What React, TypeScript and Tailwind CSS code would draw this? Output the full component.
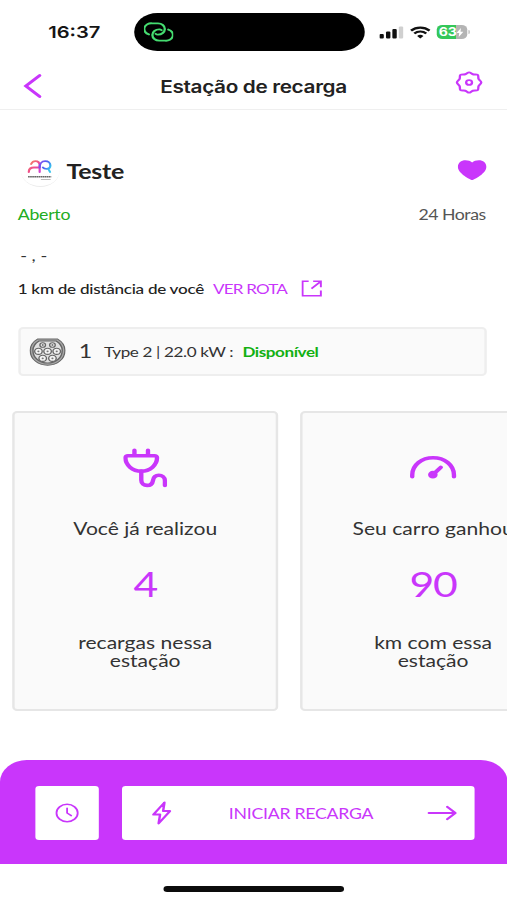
import React from 'react';

const PURPLE = '#c936fb';

const stats = [
  { id: 'charges', icon: <PlugIcon />, title: 'Você já realizou', value: '4', lines: ['recargas nessa', 'estação'] },
  { id: 'km', icon: <GaugeIcon />, title: 'Seu carro ganhou', value: '90', lines: ['km com essa', 'estação'] },
];

function LinkIcon() {
  return (
    <svg width="24" height="20" viewBox="0 0 24 20" fill="none" stroke="#45dc70" strokeWidth="1.9" strokeLinecap="round">
      <path d="M4 12.4A5.7 5.7 0 0 1 6.8 1.4h4.7a5.6 5.6 0 0 1 0 11.2c-.8 0-1.4-.3-1.9-.8" />
      <path d="M20 7.6a5.7 5.7 0 0 1-2.8 11h-4.7a5.6 5.6 0 0 1 0-11.2c.8 0 1.4.3 1.9.8" />
    </svg>
  );
}

function SignalIcon() {
  return (
    <svg width="20" height="13" viewBox="0 0 20 13">
      <rect x="0" y="8" width="3.6" height="4.5" rx="1" fill="#111" />
      <rect x="5.4" y="5.6" width="3.6" height="6.9" rx="1" fill="#111" />
      <rect x="10.6" y="3" width="3.6" height="9.5" rx="1" fill="#111" />
      <rect x="15.9" y="0.4" width="3.6" height="12.1" rx="1" fill="#d0d0d0" />
    </svg>
  );
}

function WifiIcon() {
  return (
    <svg width="17" height="13" viewBox="0 0 17 13" fill="none" stroke="#111" strokeWidth="2.2">
      <path d="M0.9 4.6a11 11 0 0 1 15.2 0" />
      <path d="M3.6 7.5a7 7 0 0 1 9.8 0" />
      <path d="M8.5 12.6 5.9 9.9a3.8 3.8 0 0 1 5.2 0z" fill="#111" stroke="none" />
    </svg>
  );
}

function Battery() {
  return (
    <div className="flex items-center">
      <div className="flex h-[14px] w-[25px] items-center justify-center overflow-hidden rounded-[4.5px] bg-linear-to-r from-[#34c759] from-64% to-[#b4b4b4] to-64%">
        <span className="font-['Inter'] text-[11.5px] font-bold leading-[14px] text-white">63</span>
        <svg width="6" height="9" viewBox="0 0 6 9" fill="#fff"><path d="M3.8 0 0.2 5h2.2L2 9l3.8-5.2H3.5z" /></svg>
      </div>
      <div className="ml-px h-[4px] w-[1.5px] rounded-r bg-[#b4b4b4]" />
    </div>
  );
}

function GearIcon() {
  return (
    <svg width="23" height="23" viewBox="0 0 24 24" fill="none" stroke={PURPLE} strokeWidth="2" strokeLinejoin="round">
      <path d="M12 1.4c1.3 0 1.900 1.500 3.200 2 1.300.5 3.300-.3 4.200.7s.2 2.900.7 4.200c.5 1.300 2.300 2.300 2.300 3.700s-1.800 2.400-2.300 3.700c-.5 1.300.2 3.300-.7 4.200s-2.900.2-4.200.7c-1.300.5-1.900 2-3.200 2s-1.900-1.500-3.200-2c-1.300-.5-3.300.3-4.200-.7s-.2-2.900-.7-4.200C3.400 14.400 1.600 13.400 1.600 12s1.800-2.400 2.300-3.700c.5-1.300-.2-3.300.7-4.200s2.900-.2 4.200-.7C10.100 2.900 10.700 1.400 12 1.400z" />
      <circle cx="12" cy="12" r="2.5" />
    </svg>
  );
}

function HeartIcon() {
  return (
    <svg width="24" height="20" viewBox="0 0 24 20" fill={PURPLE}>
      <path d="M12 20C10.5 20 0.3 13.5 0.3 6.8 0.3 3 3 0.3 6.5 0.3c2.3 0 4.2.9 5.500 2.200C13.3 1.2 15.2.3 17.500.3c3.500 0 6.200 2.700 6.200 6.500C23.700 13.500 13.500 20 12 20z" />
    </svg>
  );
}

function StationLogo() {
  return (
    <svg width="34" height="34" viewBox="0 0 34 34">
      <defs>
        <linearGradient id="archLeft" x1="0" x2="1" y1="0" y2="1">
          <stop offset="0" stopColor="#f58a5a" />
          <stop offset="0.5" stopColor="#f0508c" />
          <stop offset="1" stopColor="#d43ccf" />
        </linearGradient>
        <linearGradient id="archRight" x1="0" x2="1" y1="0" y2="0.6">
          <stop offset="0" stopColor="#8a4cf0" />
          <stop offset="0.6" stopColor="#4a66f2" />
          <stop offset="1" stopColor="#38c4ee" />
        </linearGradient>
      </defs>
      <circle cx="17" cy="17.2" r="15.8" fill="#ececec" />
      <circle cx="17" cy="16" r="16.1" fill="#fff" />
      <g fill="none" strokeWidth="1.8" strokeLinecap="round">
        <path d="M7.600 18c0-2.800 1.600-4.500 4.200-4.500h4.500M9.500 10c.8-1.800 2-2.800 3.500-2.800 2.300 0 3.500 1.800 3.500 4.500V18" stroke="url(#archLeft)" />
        <path d="M16.500 13.500c0-3.800 1.700-6.300 4.500-6.300 2.600 0 4.300 1.800 4.300 4.300 0 2.200-1.300 3.300-3.300 3.300-1.500 0-2.300-.6-2.800-1.300M23.500 14.500l1.500 3.500" stroke="url(#archRight)" />
      </g>
      <path d="M7 22.7h19" stroke="#666" strokeWidth="1.4" strokeDasharray="1.4 .3" />
      <path d="M17.5 25.5h8" stroke="#bbb" strokeWidth="0.9" />
    </svg>
  );
}

function RouteIcon() {
  return (
    <svg width="17" height="17" viewBox="0 0 17 17" fill="none" stroke={PURPLE} strokeWidth="1.6">
      <path d="M6 1.3H1v14.400h15v-5.200" />
      <path d="M9.700 1.300H16v6M16 1.300 8.300 8.700" />
    </svg>
  );
}

function ConnectorIcon() {
  const pins = [[11, 7], [19, 7], [7.5, 13.3], [15, 13.3], [22.5, 13.3], [11, 20.3], [19, 20.3]];
  return (
    <svg width="30" height="28" viewBox="0 0 30 28" fill="none" stroke="#666">
      <path d="M7 .9h16c3.500 2.500 6.200 6.600 6.200 11.500C29.200 21 23 27.200 15 27.200S.8 21 .8 12.400C.8 7.500 3.500 3.400 7 .9z" fill="#a8a8a8" strokeWidth="1" />
      <path d="M8 3h14c3 2.200 5 5.500 5 9.400 0 7.400-5.400 12.600-12 12.600S3 19.800 3 12.400C3 8.500 5 5.200 8 3z" fill="#e0e0e0" strokeWidth="1.2" />
      {pins.map(([x, y], i) => (
        <g key={i}>
          <circle cx={x} cy={y} r={i < 2 ? 2.3 : 3.1} fill="#f3f3f3" strokeWidth="1.1" />
          <circle cx={x} cy={y} r="0.9" fill="#777" stroke="none" />
        </g>
      ))}
    </svg>
  );
}

function PlugIcon() {
  return (
    <svg width="36" height="40" viewBox="0 0 36 40" fill="none" stroke={PURPLE} strokeWidth="3.6" strokeLinecap="round" strokeLinejoin="round">
      <path d="M9.200 2.200v5M20.300 2.200v5" />
      <path d="M3.800 7.800h21.900a2 2 0 0 1 2 2c0 7.200-5.500 13.300-12.900 13.300S1.800 17 1.800 9.800a2 2 0 0 1 2-2z" />
      <path d="M14.800 23.300V32c0 3.500 2.100 5.400 4.800 5.400s4.400-2 4.800-5c.4-3.300 2.200-5.200 4.800-5.200s5 2.200 5 5.500v4.700" />
    </svg>
  );
}

function GaugeIcon() {
  return (
    <svg width="40" height="40" viewBox="0 0 40 40" fill="none" stroke={PURPLE} strokeWidth="3.6" strokeLinecap="round">
      <path d="M2.900 28.800V27C2.900 17 10.600 9.700 20 9.700S37.100 17 37.100 27v1.800" />
      <path d="M20 26.500 26.300 19.400" />
      <circle cx="19.8" cy="26.700" r="3.9" fill={PURPLE} stroke="none" />
    </svg>
  );
}

function StatCard({ icon, title, value, lines }: { icon: React.ReactNode; title: string; value: string; lines: string[] }) {
  return (
    <div className="flex h-[300px] w-[218px] shrink-0 flex-col items-center rounded border-2 border-[#e6e6e6] bg-[#fafafa] pt-[35px] text-[#333]">
      <div className="h-10">{icon}</div>
      <p className="mt-[29px] whitespace-nowrap text-[17.3px] leading-6">{title}</p>
      <p className="mt-[24px] text-[35px] leading-9 tracking-[-1px] text-[#c936fb]">{value}</p>
      <div className="mt-[33px] text-center text-[17.3px] leading-[17.5px]">
        {lines.map((line) => <p key={line}>{line}</p>)}
      </div>
    </div>
  );
}

export default function App() {
  return (
    <div className="h-[900px] w-[507px] overflow-hidden bg-white">
      {/* the phone screen is laid out narrow and widened to fill the window */}
      <div className="flex h-[900px] w-[415.6px] origin-top-left scale-x-[1.22] flex-col overflow-hidden font-['Lato',sans-serif]">
        <div className="flex h-[51px] shrink-0 items-center pt-[13px]">
          <span className="ml-[39.5px] w-[70px] font-['Inter'] text-[16.5px] font-semibold leading-none text-[#151515]">16:37</span>
          <div className="flex h-[38px] w-[189.5px] items-center rounded-full bg-black pl-[8px]">
            <LinkIcon />
          </div>
          <div className="ml-[11.5px] flex items-center gap-[5px]">
            <SignalIcon />
            <WifiIcon />
            <Battery />
          </div>
        </div>

        <header className="flex h-[59px] shrink-0 items-center justify-between border-b border-[#efefef] pl-[19px] pr-[20px] pt-[11px]">
          <svg width="23" height="26" viewBox="0 0 23 26" fill="none" stroke={PURPLE} strokeWidth="2.8" strokeLinecap="round">
            <path d="M13.5 2.5 2.2 13l11.3 10.5" />
          </svg>
          <h1 className="pl-px pt-[5px] font-['Inter'] text-[17px] font-semibold tracking-[-0.28px] text-[#222]">Estação de recarga</h1>
          <div className="-mt-[7px]"><GearIcon /></div>
        </header>

        <section className="flex h-[217px] shrink-0 flex-col px-[14.5px]">
          <div className="mt-[43px] flex h-9 items-center">
            <div className="ml-[1px]"><StationLogo /></div>
            <h2 className="ml-[5px] text-[20.5px] font-bold tracking-[-0.2px] text-[#222]">Teste</h2>
            <div className="-mt-[2px] ml-auto mr-[2px]"><HeartIcon /></div>
          </div>
          <div className="mt-[16px] flex h-5 items-center justify-between text-[14.5px] tracking-[-0.2px]">
            <span className="text-[#22ac22]">Aberto</span>
            <span className="mr-[3px] tracking-[-0.4px] text-[#555]">24 Horas</span>
          </div>
          <p className="mt-[20px] h-5 pl-[2px] text-[15px] leading-5 text-[#333]">- ,&nbsp;-</p>
          <div className="mt-[13px] flex h-5 items-center whitespace-nowrap text-[14px] tracking-[-0.22px]">
            <span className="font-medium text-[#222]">1 km de distância de você</span>
            <span className="ml-[7.5px] tracking-[-0.7px] text-[#c936fb]">VER ROTA</span>
            <div className="ml-[12px]"><RouteIcon /></div>
          </div>
        </section>

        <div className="ml-[14.5px] flex h-[49px] w-[384px] shrink-0 items-center rounded border-2 border-[#eeeeee] bg-[#fafafa] pl-[7.5px] text-[14px] tracking-[-0.3px] text-[#333]">
          <ConnectorIcon />
          <span className="ml-[10.5px] text-[19px]">1</span>
          <span className="ml-[10px]">Type 2 | 22.0 kW :</span>
          <span className="ml-[7.5px] text-[14px] font-bold tracking-[-0.35px] text-[#12b012]">Disponível</span>
        </div>

        <div className="ml-[10px] mt-[35px] flex shrink-0 gap-[18px]">
          {stats.map(({ id, ...stat }) => <StatCard key={id} {...stat} />)}
        </div>

        <div className="mt-[49px] flex h-[104px] shrink-0 items-center gap-[19px] rounded-t-[22px] bg-[#c936fb] pl-[29px] pt-[2px] text-[#c936fb]">
          <button className="flex h-[54px] w-[52px] items-center justify-center rounded-[3px] bg-white">
            <svg width="20" height="20" viewBox="0 0 20 20" fill="none" stroke={PURPLE} strokeWidth="1.5" strokeLinecap="round">
              <circle cx="10" cy="10" r="8.7" />
              <path d="M10 5.200V10l3.400 2.600" />
            </svg>
          </button>
          <button className="flex h-[54px] w-[289px] items-center justify-between rounded-[3px] bg-white pl-[23.5px] pr-[14px]">
            <svg width="17" height="24" viewBox="0 0 17 24" fill="none" stroke={PURPLE} strokeWidth="2" strokeLinejoin="round">
              <path d="M10.800 1.500 1.700 13.600h5.500L6 22.500l9.300-12.400H9.700z" />
            </svg>
            <span className="pl-[3px] pt-[2px] text-[14.5px] tracking-[-0.22px]">INICIAR RECARGA</span>
            <svg width="25" height="16" viewBox="0 0 25 16" fill="none" stroke={PURPLE} strokeWidth="2" strokeLinecap="round" strokeLinejoin="round">
              <path d="M1.500 8h21.500M16.500 1.800 23.300 8l-6.800 6.200" />
            </svg>
          </button>
        </div>

        <div className="mx-auto mt-[22px] h-[6px] w-[148px] shrink-0 rounded-full bg-[#0c0c0c]" />
      </div>
    </div>
  );
}
